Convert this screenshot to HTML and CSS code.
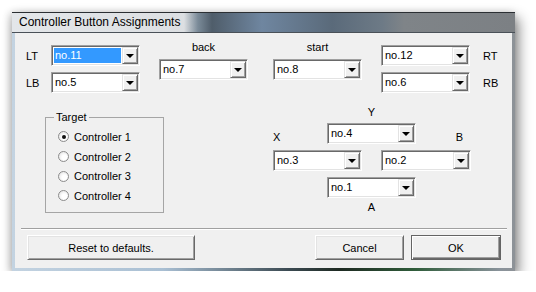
FILE: index.html
```html
<!DOCTYPE html>
<html lang="en">
<head>
    <meta charset="UTF-8">
    <title>Controller Button Assignments</title>
    <link rel="stylesheet" href="styles.css">
</head>
<body>
    <div class="window">
        <div class="titlebar">Controller Button Assignments</div>
        <div class="frame">
            <div class="client">
                <div class="top">
                    <!-- left shoulder buttons and target -->
                    <div class="left">
                        <div class="shoulder">
                            <span class="key">LT</span>
                            <div class="combo"><span class="value selected">no.11</span><span class="drop"></span></div>
                        </div>
                        <div class="shoulder">
                            <span class="key">LB</span>
                            <div class="combo"><span class="value">no.5</span><span class="drop"></span></div>
                        </div>
                        <fieldset class="group">
                            <legend>Target</legend>
                            <label class="radio-row"><span class="radio checked"></span>Controller 1</label>
                            <label class="radio-row"><span class="radio"></span>Controller 2</label>
                            <label class="radio-row"><span class="radio"></span>Controller 3</label>
                            <label class="radio-row"><span class="radio"></span>Controller 4</label>
                        </fieldset>
                    </div>

                    <div class="column back-col">
                        <div class="caption">back</div>
                        <div class="combo"><span class="value">no.7</span><span class="drop"></span></div>
                    </div>

                    <div class="right">
                        <div class="upper">
                            <div class="column">
                                <div class="caption">start</div>
                                <div class="combo"><span class="value">no.8</span><span class="drop"></span></div>
                            </div>
                            <div class="shoulders-r">
                                <div class="shoulder">
                                    <div class="combo"><span class="value">no.12</span><span class="drop"></span></div>
                                    <span class="key-r">RT</span>
                                </div>
                                <div class="shoulder">
                                    <div class="combo"><span class="value">no.6</span><span class="drop"></span></div>
                                    <span class="key-r">RB</span>
                                </div>
                            </div>
                        </div>

                        <!-- face buttons -->
                        <div class="pad">
                            <div class="pad-label lbl-y">Y</div>
                            <div class="pad-label lbl-x">X</div>
                            <div class="combo pos-y"><span class="value">no.4</span><span class="drop"></span></div>
                            <div class="pad-label lbl-b">B</div>
                            <div class="combo pos-x"><span class="value">no.3</span><span class="drop"></span></div>
                            <div class="combo pos-b"><span class="value">no.2</span><span class="drop"></span></div>
                            <div class="combo pos-a"><span class="value">no.1</span><span class="drop"></span></div>
                            <div class="pad-label lbl-a">A</div>
                        </div>
                    </div>
                </div>

                <div class="separator"></div>

                <div class="actions">
                    <button class="btn reset">Reset to defaults.</button>
                    <button class="btn cancel">Cancel</button>
                    <button class="btn ok">OK</button>
                </div>
            </div>
        </div>
    </div>
</body>
</html>
```

FILE: styles.css
```css
body {
    margin: 0;
    background-color: #fff;
    font-family: "Liberation Sans", Arial, sans-serif;
    font-size: 11px;
    color: #000;
}

.window {
    width: 503px;
    height: 259px;
    margin: 12px 0 0 12px;
    display: flex;
    flex-direction: column;
    box-shadow: 4px 6px 12px rgba(0,0,0,0.45), -2px 1px 8px rgba(0,0,0,0.2);
}

.titlebar {
    height: 19px;
    line-height: 19px;
    padding-left: 7px;
    font-size: 12px;
    border-top: 1px solid #2b2f33;
    border-bottom: 1px solid #4a5158;
    background: linear-gradient(to right, #e3e6e9 0, #dcdfe2 172px, #7a8a98 186px, #4f5d6a 200px, #6f86a0 250px, #5a6a7a 320px, #6d7a86 370px, #7f8488 392px, #7c8084 100%);
}

.frame {
    flex: 1;
    padding: 0 3px 3px 3px;
    background: linear-gradient(to right, #c3d3e1 0, #a9bfd3 30%, #3b4a52 55%, #1e2a22 65%, #2f5c3a 80%, #8a939b 97%, #8d9297 100%);
}

.client {
    height: 235px;
    background-color: #f0f0f0;
    display: flex;
    flex-direction: column;
}

.top {
    height: 195px;
    display: flex;
    align-items: flex-start;
}

/* combo box */
.combo {
    width: 89px;
    height: 21px;
    box-sizing: border-box;
    display: flex;
    align-items: stretch;
    background-color: #fff;
    border: 1px solid;
    border-color: #a0a0a0 #fff #fff #a0a0a0;
    box-shadow: inset 1px 1px 0 #696969, inset -1px -1px 0 #e3e3e3;
    padding: 1px;
}

.value {
    flex: 1;
    margin: 1px;
    padding-left: 1px;
    line-height: 15px;
}

.value.selected {
    background-color: #3399ff;
    color: #fff;
}

.drop {
    width: 16px;
    box-sizing: border-box;
    background-color: #f0f0f0;
    border: 1px solid;
    border-color: #e3e3e3 #696969 #696969 #e3e3e3;
    box-shadow: inset 1px 1px 0 #fff, inset -1px -1px 0 #a0a0a0;
    display: flex;
    align-items: center;
    justify-content: center;
}

.drop::after {
    content: "";
    border-left: 4px solid transparent;
    border-right: 4px solid transparent;
    border-top: 4px solid #000;
    margin-top: 1px;
}

/* left side */
.left {
    width: 114px;
    flex-shrink: 0;
    margin-left: 11px;
    padding-top: 12px;
}

.shoulder {
    display: flex;
    align-items: center;
    height: 21px;
}

.shoulder + .shoulder {
    margin-top: 6px;
}

.key {
    width: 25px;
}

.key-r {
    margin-left: 13px;
}

.group {
    margin: 18px 0 0 19px;
    padding: 0 0 0 8px;
    width: 119px;
    height: 102px;
    box-sizing: border-box;
    border: 1px solid #a5a5a5;
}

.group legend {
    padding: 0 2px;
    line-height: 13px;
}

.radio-row {
    display: flex;
    align-items: center;
    height: 19.7px;
    margin-left: 4px;
    white-space: nowrap;
}

.radio-row:first-of-type {
    margin-top: 3px;
}

.radio {
    width: 11px;
    height: 11px;
    box-sizing: border-box;
    border-radius: 50%;
    border: 1px solid #8c8c8c;
    background: radial-gradient(circle at 60% 60%, #fff 30%, #dcdcdc 100%);
    margin-right: 5px;
    display: flex;
    align-items: center;
    justify-content: center;
}

.radio.checked::after {
    content: "";
    width: 4px;
    height: 4px;
    border-radius: 50%;
    background-color: #111;
}

/* columns with caption above */
.column {
    width: 89px;
    flex-shrink: 0;
}

.back-col {
    margin-left: 19px;
}

.caption {
    padding-top: 8px;
    line-height: 13px;
    text-align: center;
}

.column .combo {
    margin-top: 5px;
}

.right {
    margin-left: 25px;
}

.upper {
    display: flex;
}

.shoulders-r {
    margin-left: 19px;
    padding-top: 12px;
}

/* face buttons grid */
.pad {
    margin-top: 13px;
    display: grid;
    grid-template-columns: 54px 35px 19px 35px 55px;
    grid-template-rows: 17px 21px 6px 21px 6px 21px 16px;
}

.pad-label {
    line-height: 13px;
}

.lbl-y {
    grid-column: 2 / 5;
    grid-row: 1;
    align-self: start;
    text-align: center;
}

.lbl-x {
    grid-column: 1;
    grid-row: 2;
    align-self: end;
}

.lbl-b {
    grid-column: 5;
    grid-row: 2;
    align-self: end;
    text-align: right;
    padding-right: 8px;
}

.pos-y {
    grid-column: 2 / 5;
    grid-row: 2;
}

.pos-x {
    grid-column: 1 / 3;
    grid-row: 4;
}

.pos-b {
    grid-column: 4 / 6;
    grid-row: 4;
    width: 90px;
}

.pos-a {
    grid-column: 2 / 5;
    grid-row: 6;
}

.lbl-a {
    grid-column: 2 / 5;
    grid-row: 7;
    align-self: end;
    text-align: center;
}

/* bottom */
.separator {
    height: 1px;
    margin: 0 5px 0 6px;
    background-color: #a0a0a0;
    border-bottom: 1px solid #fff;
}

.actions {
    display: flex;
    margin-top: 5px;
    padding: 0 11px 0 12px;
}

.btn {
    height: 25px;
    box-sizing: border-box;
    padding: 0;
    font-family: inherit;
    font-size: 11px;
    color: #000;
    background-color: #f0f0f0;
    border: 1px solid;
    border-color: #fff #696969 #696969 #fff;
    box-shadow: inset 1px 1px 0 #e3e3e3, inset -1px -1px 0 #a0a0a0;
}

.reset {
    width: 168px;
}

.cancel {
    width: 89px;
    margin-left: auto;
}

.ok {
    width: 90px;
    margin-left: 7px;
    border: 1px solid #646464;
    box-shadow: inset 1px 1px 0 #fff, inset -1px -1px 0 #696969, inset -2px -2px 0 #a0a0a0;
}
```
